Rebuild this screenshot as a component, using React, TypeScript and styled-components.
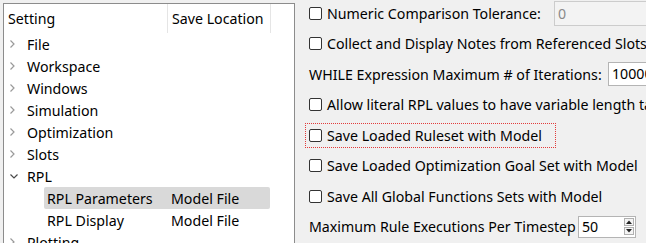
import styled, { createGlobalStyle } from 'styled-components';

const GlobalStyle = createGlobalStyle`
  html, body {
    margin: 0;
    padding: 0;
    background: #f0f0f0;
    overflow: hidden;
  }
  body {
    font-family: 'Noto Sans', 'Open Sans', sans-serif;
    font-size: 14.2px;
    color: #000;
  }
`;

const Page = styled.div`
  display: flex;
  align-items: flex-start;
  width: 646px;
  height: 243px;
  overflow: hidden;
`;

const TreePanel = styled.div`
  flex: none;
  width: 290px;
  height: 260px;
  margin: 3px 0 0 3px;
  background: #fff;
  border: 1px solid #8c8c8c;
  border-bottom: none;
`;

const HeaderRow = styled.div`
  display: flex;
  height: 29px;
`;

const HeaderCell = styled.div<{ $width: number }>`
  width: ${(p) => p.$width}px;
  padding-left: 4px;
  box-sizing: border-box;
  line-height: 29px;
  border-right: 1px solid #e5e5e5;
  white-space: nowrap;
`;

const TreeRow = styled.div<{ $level: number }>`
  display: flex;
  align-items: center;
  height: 22px;
  padding-left: ${(p) => p.$level * 20}px;
  line-height: 21px;
`;

const Expander = styled.div`
  flex: none;
  width: 20px;
  height: 22px;
  display: flex;
  align-items: center;
  padding-left: 6px;
  box-sizing: border-box;
`;

const RowBody = styled.div<{ $selected?: boolean }>`
  display: flex;
  align-items: center;
  height: 22px;
  border-radius: 2px;
  background: ${(p) => (p.$selected ? '#d9d9d9' : 'transparent')};
`;

const Cell = styled.div<{ $width: number }>`
  width: ${(p) => p.$width}px;
  padding-left: ${(p) => (p.$width > 110 ? 3 : 4)}px;
  box-sizing: border-box;
  white-space: nowrap;
`;

const SettingsPanel = styled.div`
  flex: none;
  display: flex;
  flex-direction: column;
  margin-top: -2px;
  padding-left: 10px;
  white-space: nowrap;
`;

const SettingRow = styled.div`
  display: flex;
  align-items: center;
  height: 30.5px;
`;

const CheckLabel = styled.label<{ $focused?: boolean; $width?: number }>`
  display: flex;
  align-items: center;
  gap: 5px;
  height: 25px;
  box-sizing: border-box;
  padding: 0 ${(p) => (p.$focused ? 13 : 3)}px 0 3px;
  border: 1px ${(p) => (p.$focused ? 'dotted #e23b3b' : 'solid transparent')};
  ${(p) => (p.$width ? `width: ${p.$width}px;` : '')}
`;

const Box = styled.span`
  flex: none;
  width: 13px;
  height: 13px;
  box-sizing: border-box;
  border: 1px solid #333;
  border-radius: 2px;
  background: #fff;
`;

const FieldLabel = styled.span<{ $width: number }>`
  display: block;
  width: ${(p) => p.$width}px;
  padding-left: 4px;
  box-sizing: border-box;
`;

const TextInput = styled.div<{ $disabled?: boolean; $height: number }>`
  flex: none;
  width: 120px;
  height: ${(p) => p.$height}px;
  box-sizing: border-box;
  padding-left: 3px;
  line-height: ${(p) => p.$height - 2}px;
  background: ${(p) => (p.$disabled ? '#f3f3f3' : '#fff')};
  color: ${(p) => (p.$disabled ? '#8a8a8a' : '#000')};
  border: 1px solid ${(p) => (p.$disabled ? '#cccccc' : '#b4b4b4')};
`;

const SpinBox = styled.div`
  flex: none;
  display: flex;
  width: 58px;
  height: 22px;
  box-sizing: border-box;
  background: #fff;
  border: 1px solid #b4b4b4;
`;

const SpinValue = styled.span`
  flex: 1;
  padding-left: 3px;
  line-height: 20px;
`;

const SpinButtons = styled.div`
  display: flex;
  flex-direction: column;
  justify-content: center;
  gap: 1px;
  padding-right: 1px;
`;

const SpinButton = styled.div`
  width: 10px;
  height: 8px;
  box-sizing: border-box;
  border: 1px solid #b0b0b0;
  background: #f4f4f4;
  display: flex;
  align-items: center;
  justify-content: center;
`;

const Chevron = ({ open }: { open?: boolean }) =>
  open ? (
    <svg width="8" height="5" viewBox="0 0 8 5">
      <path d="M0.5 0.5 L4 4 L7.5 0.5" fill="none" stroke="#4a4a4a" strokeWidth="1.2" />
    </svg>
  ) : (
    <svg width="5" height="8" viewBox="0 0 5 8">
      <path d="M0.5 0.5 L4 4 L0.5 7.5" fill="none" stroke="#9a9a9a" strokeWidth="1.2" />
    </svg>
  );

const Triangle = ({ up }: { up?: boolean }) => (
  <svg width="6" height="4" viewBox="0 0 6 4">
    <path d={up ? 'M0 4 L3 0.5 L6 4 Z' : 'M0 0 L3 3.5 L6 0 Z'} fill="#222" />
  </svg>
);

type TreeItem = {
  name: string;
  level: number;
  location?: string;
  expander?: 'open' | 'closed';
  selected?: boolean;
};

const treeItems: TreeItem[] = [
  { name: 'File', level: 0, expander: 'closed' },
  { name: 'Workspace', level: 0, expander: 'closed' },
  { name: 'Windows', level: 0, expander: 'closed' },
  { name: 'Simulation', level: 0, expander: 'closed' },
  { name: 'Optimization', level: 0, expander: 'closed' },
  { name: 'Slots', level: 0, expander: 'closed' },
  { name: 'RPL', level: 0, expander: 'open' },
  { name: 'RPL Parameters', level: 1, location: 'Model File', selected: true },
  { name: 'RPL Display', level: 1, location: 'Model File' },
  { name: 'Plotting', level: 0, expander: 'closed' },
];

const Check = ({ text, focused, width }: { text: string; focused?: boolean; width?: number }) => (
  <CheckLabel $focused={focused} $width={width}>
    <Box />
    {text}
  </CheckLabel>
);

export default function App() {
  return (
    <>
      <GlobalStyle />
      <Page>
        <TreePanel>
          <HeaderRow>
            <HeaderCell $width={164}>Setting</HeaderCell>
            <HeaderCell $width={103}>Save Location</HeaderCell>
          </HeaderRow>
          {treeItems.map((item) => (
            <TreeRow key={item.name} $level={item.level}>
              <Expander>{item.expander && <Chevron open={item.expander === 'open'} />}</Expander>
              <RowBody $selected={item.selected}>
                <Cell $width={143 - item.level * 20}>{item.name}</Cell>
                <Cell $width={103}>{item.location}</Cell>
              </RowBody>
            </TreeRow>
          ))}
        </TreePanel>

        <SettingsPanel>
          <SettingRow>
            <Check text="Numeric Comparison Tolerance:" width={249} />
            <TextInput $disabled $height={25}>0</TextInput>
          </SettingRow>
          <SettingRow>
            <Check text="Collect and Display Notes from Referenced Slots" />
          </SettingRow>
          <SettingRow>
            <FieldLabel $width={303}>WHILE Expression Maximum # of Iterations:</FieldLabel>
            <TextInput $height={24}>10000</TextInput>
          </SettingRow>
          <SettingRow>
            <Check text="Allow literal RPL values to have variable length tables" />
          </SettingRow>
          <SettingRow>
            <Check text="Save Loaded Ruleset with Model" focused />
          </SettingRow>
          <SettingRow>
            <Check text="Save Loaded Optimization Goal Set with Model" />
          </SettingRow>
          <SettingRow>
            <Check text="Save All Global Functions Sets with Model" />
          </SettingRow>
          <SettingRow>
            <FieldLabel $width={273}>Maximum Rule Executions Per Timestep</FieldLabel>
            <SpinBox>
              <SpinValue>50</SpinValue>
              <SpinButtons>
                <SpinButton>
                  <Triangle up />
                </SpinButton>
                <SpinButton>
                  <Triangle />
                </SpinButton>
              </SpinButtons>
            </SpinBox>
          </SettingRow>
        </SettingsPanel>
      </Page>
    </>
  );
}
